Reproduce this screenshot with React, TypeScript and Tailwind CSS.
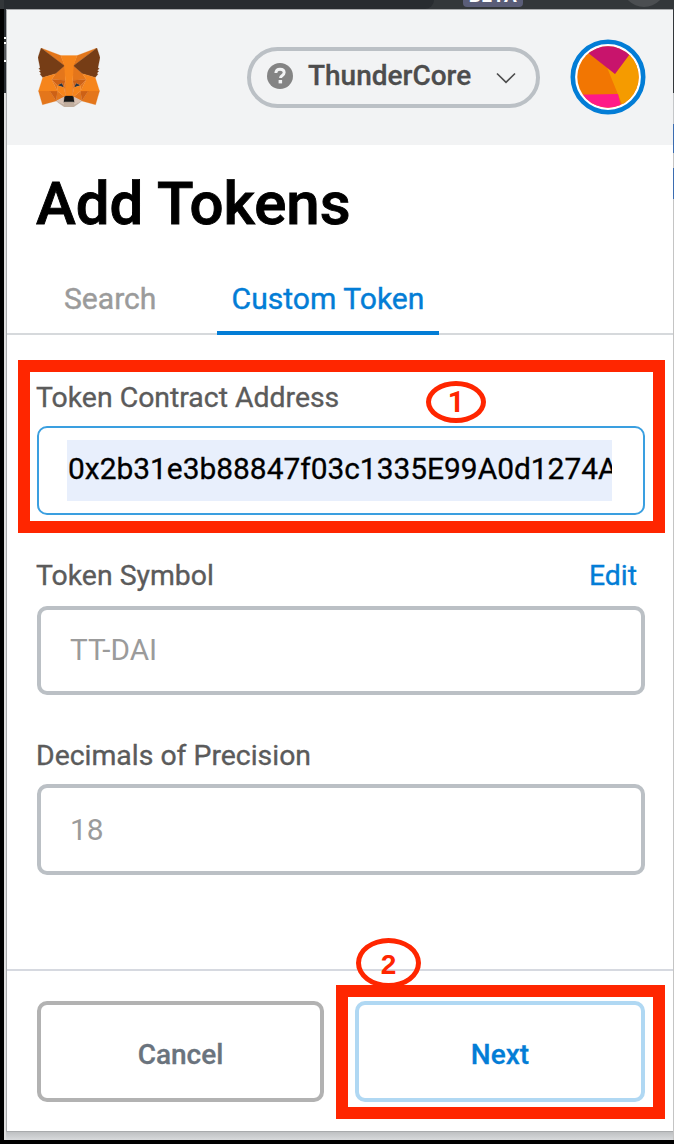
import type { ReactNode } from "react";

const FOX: [string, string][] = [
  ["#e2761b", "274.1,35.5 174.6,109.4 193,65.8"],
  ["#e4761b", "44.4,35.5 143.1,110.1 125.6,65.8"],
  ["#e4761b", "238.3,206.8 211.8,247.4 268.5,263 284.8,207.7"],
  ["#e4761b", "33.9,207.7 50.1,263 106.8,247.4 80.3,206.8"],
  ["#e4761b", "103.6,138.2 87.8,162.1 144.1,164.6 142.1,104.1"],
  ["#e4761b", "214.9,138.2 175.9,103.4 174.6,164.6 230.8,162.1"],
  ["#e4761b", "106.8,247.4 140.6,230.9 111.4,208.1"],
  ["#e4761b", "177.9,230.9 211.8,247.4 207.1,208.1"],
  ["#d7c1b3", "211.8,247.4 177.9,230.9 180.6,253 180.3,262.3"],
  ["#d7c1b3", "106.8,247.4 138.3,262.3 138.1,253 140.6,230.9"],
  ["#233447", "138.8,193.5 110.6,185.2 130.5,176.1"],
  ["#233447", "179.7,193.5 188,176.1 208,185.2"],
  ["#cd6116", "106.8,247.4 111.6,206.8 80.3,207.7"],
  ["#cd6116", "207,206.8 211.8,247.4 238.3,207.7"],
  ["#cd6116", "230.8,162.1 174.6,164.6 179.8,193.5 188.1,176.1 208.1,185.2"],
  ["#cd6116", "110.6,185.2 130.6,176.1 138.8,193.5 144.1,164.6 87.8,162.1"],
  ["#e4751f", "87.8,162.1 111.4,208.1 110.6,185.2"],
  ["#e4751f", "208.1,185.2 207.1,208.1 230.8,162.1"],
  ["#e4751f", "144.1,164.6 138.8,193.5 145.4,227.6 146.9,182.7"],
  ["#e4751f", "174.6,164.6 171.9,182.6 173.1,227.6 179.8,193.5"],
  ["#f6851b", "179.8,193.5 173.1,227.6 177.9,230.9 207.1,208.1 208.1,185.2"],
  ["#f6851b", "110.6,185.2 111.4,208.1 140.6,230.9 145.4,227.6 138.8,193.5"],
  ["#c0ad9e", "180.3,262.3 180.6,253 178.1,250.8 140.4,250.8 138.1,253 138.3,262.3 106.8,247.4 117.8,256.4 140.1,271.9 178.4,271.9 200.8,256.4 211.8,247.4"],
  ["#763d16", "278.3,114.2 286.8,73.4 274.1,35.5 177.9,106.9 214.9,138.2 267.2,153.5 278.8,140 273.8,136.4 281.8,129.1 275.6,124.3 283.6,118.2"],
  ["#763d16", "31.8,73.4 40.3,114.2 34.9,118.2 42.9,124.3 36.8,129.1 44.8,136.4 39.8,140 51.3,153.5 103.6,138.2 140.6,106.9 44.4,35.5"],
  ["#f6851b", "267.2,153.5 214.9,138.2 230.8,162.1 207.1,208.1 238.3,207.7 284.8,207.7"],
  ["#f6851b", "103.6,138.2 51.3,153.5 33.9,207.7 80.3,207.7 111.4,208.1 87.8,162.1"],
  ["#f6851b", "174.6,164.6 177.9,106.9 193.1,65.8 125.6,65.8 140.6,106.9 144.1,164.6 145.3,182.8 145.4,227.6 173.1,227.6 173.3,182.8"],
  ["#161616", "177.9,230.9 173.1,227.6 145.4,227.6 140.6,230.9 138.1,253 140.4,250.8 178.1,250.8 180.6,253"],
];

function FoxLogo() {
  return (
    <svg className="h-[59px] w-[62px]" viewBox="31.8 35.5 255 236.4" preserveAspectRatio="none">
      {FOX.map(([fill, points], i) => (
        <polygon key={i} fill={fill} stroke={fill} strokeWidth="1" strokeLinejoin="round" points={points} />
      ))}
    </svg>
  );
}

function Avatar() {
  return (
    <svg className="h-[76px] w-[76px]" viewBox="0 0 76 76">
      <clipPath id="face">
        <circle cx="38" cy="38" r="30.7" />
      </clipPath>
      <circle cx="38" cy="38" r="35.2" fill="#fff" stroke="#037dd6" strokeWidth="4.6" />
      <g clipPath="url(#face)">
        <rect width="76" height="76" fill="#f27602" />
        <polygon points="36,26 45,35 62,12 76,20 76,76 54,70" fill="#f59b00" />
        <polygon points="0,56 48,55 53,76 0,76" fill="#ff1a88" />
        <polygon points="8,6 45,35 68,4" fill="#c8146c" />
      </g>
    </svg>
  );
}

function NetworkPill() {
  return (
    <div className="flex h-[61px] w-[293px] items-center rounded-full border-4 border-[#bbc0c5] pl-4">
      <div className="mt-[-3px] flex h-[26px] w-[26px] items-center justify-center rounded-full bg-[#848484]">
        <svg className="h-5 w-5" viewBox="0 0 20 20" fill="none">
          <path d="M5.8 7C6 4.4 7.7 3.2 10 3.2c2.400 0 4.200 1.300 4.200 3.400 0 3-3.700 2.700-3.700 5.400" stroke="#f2f3f4" strokeWidth="2.900" />
          <rect x="8.600" y="14" width="3.500" height="3.400" fill="#f2f3f4" />
        </svg>
      </div>
      <span className="mt-[-4px] ml-[15px] text-[28px] leading-9 font-medium text-[#4d4d4d] [-webkit-text-stroke:0.3px]">ThunderCore</span>
      <svg className="ml-[25px] h-3 w-5" viewBox="0 0 20 12" fill="none">
        <path d="M1 1.500l9 8.800 9-8.800" stroke="#4d4d4d" strokeWidth="1.700" />
      </svg>
    </div>
  );
}

function Field({ label, action, children }: { label: string; action?: string; children: ReactNode }) {
  return (
    <div className="flex flex-col">
      <div className="flex h-9 items-center justify-between pt-[2px] pr-2 text-[28.4px] text-[#5b5b5b]">
        <span className="ml-[-1px] [-webkit-text-stroke:0.35px]">{label}</span>
        {action && <span className="text-[#037dd6] [-webkit-text-stroke:0.35px]">{action}</span>}
      </div>
      {children}
    </div>
  );
}

function BrowserEdge() {
  return (
    <div className="flex w-[2px] flex-col">
      <div className="h-[28px] bg-[#282c30]" />
      <div className="h-[2px] bg-white" />
      <div className="h-[3px] bg-[#282c30]" />
      <div className="h-[2px] bg-white" />
      <div className="h-[16px] bg-[#55585b]" />
      <div className="h-[2px] bg-white" />
      <div className="h-[31px] bg-[#282c30]" />
      <div className="flex-1 bg-[#dedede]" />
    </div>
  );
}

export default function App() {
  return (
    <div className="relative flex h-[1144px] w-[674px] flex-col overflow-hidden bg-black font-['Roboto',sans-serif]">
      <div className="flex h-[9px] shrink-0 justify-between overflow-hidden bg-[#33373a] pl-1">
        <div className="h-[9px] w-[430px] rounded-br-[16px] bg-[#282c30]" />
        <div className="ml-[29px] h-[7px] w-[60px] overflow-hidden rounded-b-[4px] bg-[#5a5d78] text-center">
          <div className="mt-[-15px] text-[19px] leading-[22px] font-bold tracking-[0.5px] text-white">BETA</div>
        </div>
        <div className="mt-[-37px] mr-[8px] ml-auto h-11 w-11 rounded-full bg-[#4b4e51]" />
      </div>

      <div className="flex h-[1131px] shrink-0 pl-1">
        <BrowserEdge />
        <div className="flex w-[667px] flex-col bg-linear-to-b from-[#b4b6b8] from-99% to-[#d8dadc]">
          <main className="flex h-[1123px] flex-col border-t border-b border-l border-[#a9abad] bg-white">
            <header className="flex h-[135px] shrink-0 items-center bg-[#f2f3f4] pl-[31px]">
              <FoxLogo />
              <div className="ml-[147px]">
                <NetworkPill />
              </div>
              <div className="mt-[-2px] ml-[30px]">
                <Avatar />
              </div>
            </header>

            <h1 className="mt-[24px] ml-[29px] h-[69px] text-[60px] leading-[70px] font-medium text-black [-webkit-text-stroke:0.9px]">Add Tokens</h1>

            <nav className="mt-[27px] flex h-[70px] border-b-2 border-[#d6d9dc] text-[30.1px] [-webkit-text-stroke:0.4px]">
              <div className="ml-[30px] flex h-[70px] w-[180px] items-center pb-[2px] pl-[27px] text-[#9b9b9b]">Search</div>
              <div className="flex h-[70px] w-[222px] items-center justify-center border-b-[4px] border-[#037dd6] pt-[2px] text-[#037dd6]">
                Custom Token
              </div>
            </nav>

            <section className="mt-[44px] mr-[28px] ml-[30px] flex flex-col">
              <Field label="Token Contract Address">
                <div className="mt-[11px] h-[89px] rounded-[10px] border-2 border-[#3a9fe0] px-[28px] py-[12px]">
                  <div className="flex h-[61px] w-[545px] items-center overflow-hidden bg-[#e8effc] pb-[2px] pl-[1px] text-[29.9px] whitespace-nowrap text-black [-webkit-text-stroke:0.3px]">
                    0x2b31e3b88847f03c1335E99A0d1274A
                  </div>
                </div>
              </Field>
              <div className="mt-[42px]">
                <Field label="Token Symbol" action="Edit">
                  <div className="mt-[13px] flex h-[89px] items-center rounded-[10px] border-4 border-[#bbc0c5] pb-px pl-[29px] text-[29.7px] text-[#9b9b9b]">
                    TT-DAI
                  </div>
                </Field>
              </div>
              <div className="mt-[42px]">
                <Field label="Decimals of Precision">
                  <div className="mt-[11px] flex h-[91px] items-center rounded-[10px] border-4 border-[#bbc0c5] pt-px pl-[29px] text-[29.9px] text-[#9b9b9b]">
                    18
                  </div>
                </Field>
              </div>
            </section>

            <footer className="mt-[94px] flex flex-1 border-t-2 border-[#d6d9e0] pt-[30px] pl-[30px] text-[28px] font-medium [-webkit-text-stroke:0.3px]">
              <button className="h-[101px] w-[287px] rounded-[10px] border-4 border-[#b2b2b2] pt-[7px] text-[#6a737d]">Cancel</button>
              <button className="ml-[31px] h-[101px] w-[290px] rounded-[10px] border-4 border-[#b0d8f3] pt-[7px] text-[#037dd6]">Next</button>
            </footer>
          </main>
        </div>
        <div className="flex w-px flex-col">
          <div className="h-[84px] bg-[#33373a]" />
          <div className="h-[31px] bg-[#c4c6c8]" />
          <div className="h-[29px] bg-[#3b6cb0]" />
          <div className="h-[15px] bg-[#c4c4c4]" />
          <div className="h-[31px] bg-[#3b6cb0]" />
          <div className="flex-1 bg-[#c4c4c4]" />
        </div>
      </div>

      <div className="absolute top-[360px] left-[18px] h-[173px] w-[647px] border-[12px] border-[#ff2600]" />
      <div className="absolute top-[985px] left-[336px] h-[134px] w-[329px] border-[12px] border-[#ff2600]" />
      <div className="absolute top-[381px] left-[426px] flex h-[42px] w-[60px] items-center justify-center rounded-[50%] border-[5px] border-[#ff2600] pt-px font-['Roboto',sans-serif] text-[29px] font-bold text-[#ff2600]">
        1
      </div>
      <div className="absolute top-[938px] left-[356px] flex h-[50px] w-[65px] items-center justify-center rounded-[50%] border-[5px] border-[#ff2600] pt-[3px] font-['Liberation_Sans',sans-serif] text-[28px] font-bold text-[#ff2600]">
        2
      </div>
    </div>
  );
}
